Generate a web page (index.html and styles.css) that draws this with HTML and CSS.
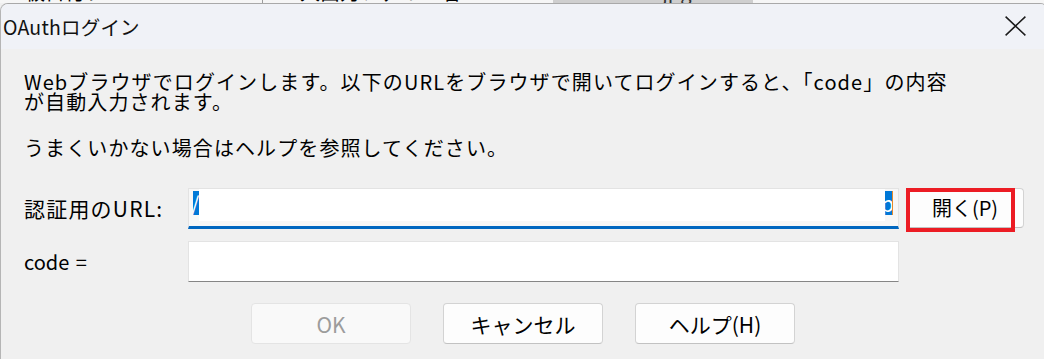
FILE: index.html
```html
<!DOCTYPE html>
<html lang="ja">
<head>
<meta charset="utf-8">
<title>OAuthログイン</title>
<link rel="stylesheet" href="styles.css">
</head>
<body>
<div class="strip">
  <span class="frag f1">■級日付プ</span>
  <span class="frag f2">入出力ファイル名</span>
  <span class="frag f3">mintest01.jpg</span>
</div>
<div class="dialog">
  <div class="titlebar">
    <span class="title">OAuthログイン</span>
    <svg class="close" width="21" height="20" viewBox="0 0 21 20"><path d="M0.6 0.6 L20.4 19.4 M20.4 0.6 L0.6 19.4" stroke="#1b1b1b" stroke-width="1.5" fill="none"/></svg>
  </div>
  <div class="body">
    <p class="msg">Webブラウザでログインします。以下のURLをブラウザで開いてログインすると、「code」の内容<br>が自動入力されます。</p>
    <p class="msg2">うまくいかない場合はヘルプを参照してください。</p>
    <div class="row">
      <span class="label wide">認証用のURL:</span>
      <div class="tb focused">
        <span class="sel sel-l"><span class="seltext">/</span></span>
        <span class="mask"></span>
        <span class="sel sel-r"><span class="seltext">p</span></span>
      </div>
      <div class="openwrap">
        <button class="btn open">開く(P)</button>
        <span class="annot"></span>
      </div>
    </div>
    <div class="row row2">
      <span class="label">code =</span>
      <div class="tb plain"></div>
    </div>
    <div class="buttons">
      <button class="btn big" disabled>OK</button>
      <button class="btn big">キャンセル</button>
      <button class="btn big">ヘルプ(H)</button>
    </div>
  </div>
</div>
</body>
</html>
```
FILE: styles.css
```css
* { box-sizing: border-box; }
html, body { margin: 0; padding: 0; }
body {
  width: 1044px;
  height: 359px;
  overflow: hidden;
  background: #f0f0f0;
  font-family: "Noto Sans CJK JP", "Noto Sans", sans-serif;
  color: #000;
}
.strip {
  height: 3px;
  overflow: hidden;
  display: flex;
  background: #f6f6f6;
  position: relative;
}
.frag {
  font-size: 20px;
  line-height: 20px;
  margin-top: -18px;
  white-space: nowrap;
  height: 21px;
}
.f1 { margin-left: 5px; width: 258px; border-right: 1px solid #9c9c9c; }
.f2 { margin-left: 37px; width: 253px; }
.f3 { background: #cfcfcf; padding-left: 10px; width: 200px; color: #333; }
.dialog {
  border-top: 1px solid #a9a9a9;
  border-left: 1px solid #b5b5b5;
  border-radius: 8px 8px 0 0;
  margin-right: -4px;
  background: #f0f0f0;
  overflow: hidden;
  height: 356px;
}
.titlebar {
  height: 45px;
  background: #f0f2f7;
  display: flex;
  align-items: center;
  justify-content: space-between;
  padding-left: 2px;
  padding-right: 22px;
}
.title {
  font-size: 19.5px;
  line-height: 24px;
  margin-top: 1px;
  letter-spacing: 0.2px;
  color: #111;
}
.close { display: block; margin-top: -1px; }
.body {
  padding: 23px 0 0 23px;
}
.msg, .msg2 {
  margin: 0;
  font-size: 20px;
  line-height: 20px;
  letter-spacing: 1.1px;
  white-space: nowrap;
}
.msg2 { margin-top: 26px; }
.row {
  display: flex;
  align-items: flex-start;
  margin-top: 30px;
  height: 41px;
}
.row2 { margin-top: 12px; }
.label {
  width: 164px;
  font-size: 20px;
  line-height: 41px;
  white-space: nowrap;
  word-spacing: 2px;
}
.label.wide {
  font-size: 21px;
  letter-spacing: 1.2px;
}
.tb {
  width: 711px;
  height: 41px;
  border: 1px solid #e3e3e3;
}
.tb.focused {
  display: flex;
  align-items: flex-start;
  background: #f7f7f7;
  border-bottom: 3px solid #0067c0;
  padding: 0 5px 0 4px;
}
.tb.plain {
  background: #fff;
  border-bottom: 1px solid #868686;
}
.sel {
  display: block;
  height: 24px;
  margin-top: 2px;
  background: #0078d7;
  overflow: hidden;
  color: #fff;
  font-size: 21px;
  line-height: 24px;
  white-space: nowrap;
}
.sel-l { width: 6px; }
.sel-l .seltext { display: block; margin-left: -2px; }
.sel-r { width: 8px; border-right: 1px solid #e38a2c; }
.sel-r .seltext { display: block; margin-left: -4px; }
.mask {
  display: block;
  flex: 1;
  height: 32px;
  background: #fff;
}
.openwrap {
  position: relative;
  margin-left: 7px;
}
.btn {
  font-family: "Noto Sans CJK JP", "Noto Sans", sans-serif;
  background: #fdfdfd;
  border: 1px solid #d3d3d3;
  border-bottom-color: #c2c2c2;
  border-radius: 4px;
  color: #000;
  padding: 0;
  margin: 0;
}
.open {
  width: 118px;
  height: 40px;
  font-size: 20px;
  line-height: 36px;
  display: block;
}
.annot {
  position: absolute;
  left: 0;
  top: 0;
  width: 109px;
  height: 44px;
  border: 4px solid #ec1c24;
}
.buttons {
  display: flex;
  gap: 32px;
  margin-top: 21px;
  padding-left: 227px;
}
.big {
  width: 160px;
  height: 41px;
  font-size: 21px;
  line-height: 36px;
}
.big:disabled {
  background: #f9f9f9;
  border-color: #e4e4e4;
  color: #9c9c9c;
}
```
